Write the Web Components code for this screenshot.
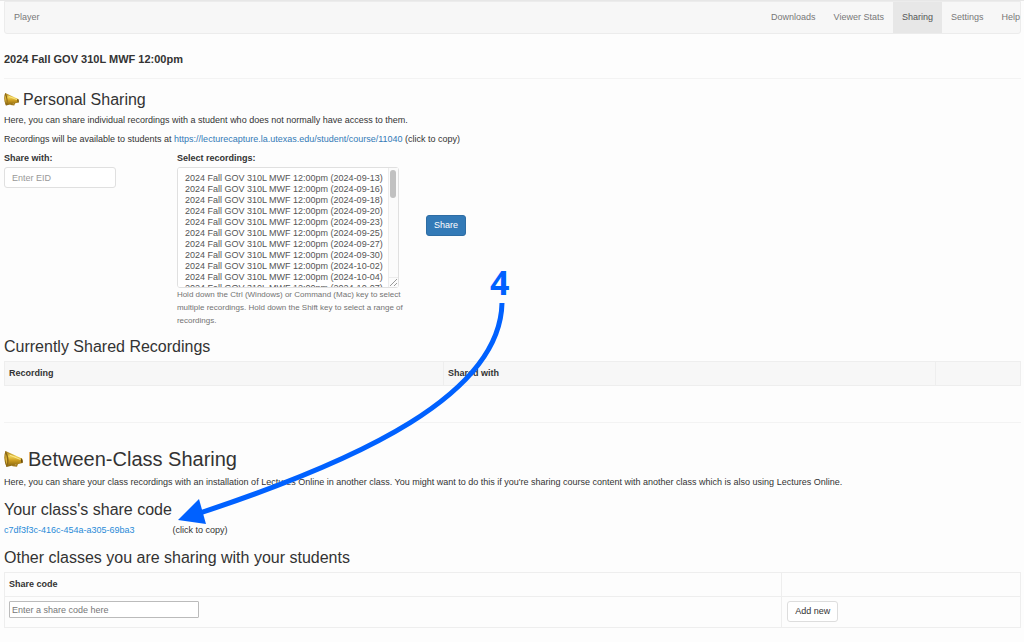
<!DOCTYPE html>
<html lang="en">
<head>
<meta charset="utf-8">
<title>Sharing</title>
<style>
  body {
    margin: 0;
    background: #fdfdfd;
    color: #333;
    font: 9px/13px "Liberation Sans", Arial, sans-serif;
  }
</style>
</head>
<body>
<lo-sharing-page></lo-sharing-page>

<script>
// navbar
class LoNavbar extends HTMLElement {
  constructor() {
    super();
    const shadow = this.attachShadow({ mode: "open" });
    shadow.innerHTML = `
      <style>
        :host { display: block; }
        nav {
          display: flex;
          justify-content: space-between;
          height: 31px;
          padding-left: 9px;
          background: #f7f7f7;
          border: 1px solid #ececec;
          border-radius: 0 0 3px 3px;
        }
        ul {
          display: flex;
          list-style: none;
          margin: 0 -9px 0 0;
          padding: 0;
        }
        a {
          display: block;
          padding: 0 9px;
          line-height: 31px;
          font-size: 9px;
          color: #777;
          text-decoration: none;
        }
        a.brand { padding: 0; }
        a:hover { color: #333; }
        a[aria-current] { background: #e7e7e7; color: #555; }
      </style>
      <nav>
        <a class="brand" href="#player">Player</a>
        <ul>
          <li><a href="#downloads">Downloads</a></li>
          <li><a href="#stats">Viewer Stats</a></li>
          <li><a href="#sharing" aria-current="page">Sharing</a></li>
          <li><a href="#settings">Settings</a></li>
          <li><a href="#help">Help</a></li>
        </ul>
      </nav>
    `;
  }
}

// megaphone icon, sized by --icon-width
class LoMegaphone extends HTMLElement {
  constructor() {
    super();
    this.attachShadow({ mode: "open" }).innerHTML = `
      <style>
        :host { display: block; width: var(--icon-width, 15px); }
        svg { display: block; width: 100%; }
      </style>
      <svg viewBox="0 0 38 34" aria-hidden="true">
        <defs>
          <linearGradient id="brass" x1="0" y1="0" x2="0" y2="1">
            <stop offset="0" stop-color="#9a7214"/>
            <stop offset=".35" stop-color="#f0d050"/>
            <stop offset=".6" stop-color="#cb9c20"/>
            <stop offset="1" stop-color="#80600f"/>
          </linearGradient>
        </defs>
        <path d="M15 25l3 4 7 1 2-6" fill="none" stroke="#a27a1d" stroke-width="3"/>
        <path d="M3 0L36 15q2 4 1 9L5 32Q-2 15 3 0z" fill="url(#brass)"/>
        <path d="M3 0q-5 15 2 32 5-5 4-15Q8 5 3 0z" fill="#8c6817"/>
        <path d="M3 5q-2 11 2 22 2-4 1-11T3 5z" fill="#dcb53c"/>
        <path d="M11 8l22 9" stroke="#fbe992" stroke-width="2"/>
        <path d="M34 15q-1 4 1 9l2 0q1-5-1-9z" fill="#6b4d0e"/>
      </svg>
    `;
  }
}

// section heading, size="large" for the bigger one
class LoHeading extends HTMLElement {
  constructor() {
    super();
    this.attachShadow({ mode: "open" }).innerHTML = `
      <style>
        :host { display: block; margin-bottom: 5px; }
        :host([size="large"]) { margin-bottom: 6px; }
        h3 {
          display: flex;
          align-items: center;
          gap: 4px;
          margin: 0;
          font-size: 16px;
          line-height: 18px;
          font-weight: 500;
        }
        :host([size="large"]) h3 {
          gap: 5px;
          font-size: 20px;
          line-height: 22px;
        }
      </style>
      <h3><slot name="icon"></slot><slot></slot></h3>
    `;
  }
}

// form for sharing single recordings with a student
class LoShareForm extends HTMLElement {
  constructor() {
    super();
    this.attachShadow({ mode: "open" }).innerHTML = `
      <style>
        :host { display: block; }
        form {
          display: grid;
          grid-template-columns: 17% 24.5% auto;
          align-items: start;
        }
        label { display: block; margin-bottom: 2px; font-weight: 700; }
        input, select {
          box-sizing: border-box;
          border: 1px solid #e0e0e0;
          border-radius: 3px;
          background: #fff;
          color: #555;
          font: inherit;
          outline: 0;
        }
        input { width: 112px; height: 21px; padding: 0 7px; }
        input::placeholder { color: #999; }
        .list { position: relative; width: 222px; }
        select {
          display: block;
          width: 100%;
          height: 121px;
          padding: 5px 0 0 5px;
          overflow-y: scroll;
          scrollbar-width: none;
        }
        option { min-height: 11px; padding: 0 2px; line-height: 11px; }
        .track {
          position: absolute;
          top: 1px;
          right: 1px;
          bottom: 1px;
          width: 10px;
          box-sizing: border-box;
          border-left: 1px solid #ececec;
          background: #fbfbfb;
          pointer-events: none;
        }
        .thumb {
          width: 6px;
          height: 28px;
          margin: 2px 1px;
          border-radius: 3px;
          background: #c1c1c1;
        }
        .grip {
          position: absolute;
          right: 0;
          bottom: 0;
          display: block;
          border-top: 1px solid #ececec;
        }
        .help { width: 230px; margin: 0; font-size: 8px; color: #737373; }
        button {
          justify-self: start;
          height: 21px;
          margin-top: 63px;
          padding: 0 7px;
          border: 1px solid #2e6da4;
          border-radius: 3px;
          background: #337ab7;
          color: #fff;
          font: inherit;
          cursor: pointer;
        }
      </style>
      <form>
        <div>
          <label for="eid">Share with:</label>
          <input id="eid" type="text" placeholder="Enter EID">
        </div>
        <div>
          <label for="recordings">Select recordings:</label>
          <div class="list">
            <select id="recordings" multiple></select>
            <div class="track">
              <div class="thumb"></div>
              <svg class="grip" width="9" height="9" viewBox="0 0 9 9" stroke="#999"><path d="M1 8L8 1M5 8L8 5"/></svg>
            </div>
          </div>
          <p class="help">Hold down the Ctrl (Windows) or Command (Mac) key to select multiple recordings. Hold down the Shift key to select a range of recordings.</p>
        </div>
        <button type="button">Share</button>
      </form>
    `;
    this.fillRecordings();
  }

  connectedCallback() {
    const select = this.shadowRoot.querySelector("select");
    select.addEventListener("scroll", () => this.moveThumb(select));
  }

  fillRecordings() {
    const dates = [
      "2024-09-13", "2024-09-16", "2024-09-18", "2024-09-20", "2024-09-23",
      "2024-09-25", "2024-09-27", "2024-09-30", "2024-10-02", "2024-10-04",
      "2024-10-07", "2024-10-09", "2024-10-11", "2024-10-14", "2024-10-16",
      "2024-10-18", "2024-10-21", "2024-10-23", "2024-10-25", "2024-10-28",
      "2024-10-30", "2024-11-01", "2024-11-04", "2024-11-06", "2024-11-08",
      "2024-11-11", "2024-11-13", "2024-11-15", "2024-11-18", "2024-11-20",
      "2024-11-22", "2024-12-02", "2024-12-04", "2024-12-06", "2024-12-09"
    ];
    const select = this.shadowRoot.querySelector("select");
    dates.forEach(date => {
      select.add(new Option(`2024 Fall GOV 310L MWF 12:00pm (${date})`, date));
    });
  }

  moveThumb(select) {
    const range = select.scrollHeight - select.clientHeight;
    const offset = range > 0 ? (select.scrollTop / range) * 77 : 0;
    this.shadowRoot.querySelector(".thumb").style.transform = `translateY(${offset}px)`;
  }
}

const tableStyles = `
  :host { display: block; }
  table { width: 100%; border-collapse: collapse; table-layout: fixed; }
  th, td { padding: 5px 4px; border: 1px solid #eee; text-align: left; vertical-align: top; }
`;

class LoSharedTable extends HTMLElement {
  constructor() {
    super();
    this.attachShadow({ mode: "open" }).innerHTML = `
      <style>
        ${tableStyles}
        th { background: #f7f7f7; }
      </style>
      <table>
        <colgroup><col style="width: 43.2%"><col style="width: 48.4%"><col></colgroup>
        <thead>
          <tr><th>Recording</th><th>Shared with</th><th></th></tr>
        </thead>
      </table>
    `;
  }
}

class LoCodeTable extends HTMLElement {
  constructor() {
    super();
    this.attachShadow({ mode: "open" }).innerHTML = `
      <style>
        ${tableStyles}
        td { padding: 4px 4px 5px; }
        td + td { padding-left: 5px; }
        input {
          display: block;
          box-sizing: border-box;
          width: 190px;
          height: 17px;
          padding: 0 2px;
          border: 1px solid #bbb;
          border-radius: 1px;
          background: #fff;
          font: inherit;
        }
        input::placeholder { color: #777; }
        button {
          display: block;
          height: 21px;
          padding: 0 7px;
          border: 1px solid #ddd;
          border-radius: 3px;
          background: #fff;
          color: #333;
          font: inherit;
          cursor: pointer;
        }
      </style>
      <table>
        <colgroup><col style="width: 76.5%"><col></colgroup>
        <thead>
          <tr><th id="code">Share code</th><th></th></tr>
        </thead>
        <tbody>
          <tr>
            <td><input type="text" aria-labelledby="code" placeholder="Enter a share code here"></td>
            <td><button type="button">Add new</button></td>
          </tr>
        </tbody>
      </table>
    `;
  }
}

// numbered arrow drawn over the page
class LoArrow extends HTMLElement {
  constructor() {
    super();
    this.attachShadow({ mode: "open" }).innerHTML = `
      <style>
        :host { position: absolute; left: 0; top: 0; pointer-events: none; }
        svg { display: block; }
        text { font: 700 34px "Open Sans", sans-serif; }
      </style>
      <svg width="520" height="540" fill="#0061ff">
        <text x="490" y="294">4</text>
        <path d="M502 302C500 394 360 459 200 512" fill="none" stroke="#0061ff" stroke-width="5"/>
        <path d="M178 519L199 498L206 523z"/>
      </svg>
    `;
  }
}

class LoSharingPage extends HTMLElement {
  constructor() {
    super();
    this.attachShadow({ mode: "open" }).innerHTML = `
      <style>
        :host {
          display: block;
          position: relative;
          padding: 0 3px 0 4px;
          border-top: 1px solid #e7e7e7;
        }
        h1 { margin: 19px 0 12px; font-size: 11px; line-height: 13px; font-weight: 700; }
        hr { margin: 0; border: 0; border-top: 1px solid #f3f3f3; }
        p { margin: 0 0 6px; }
        a { color: #337ab7; text-decoration: none; }
        section { padding-top: 12px; }
        .recordings { padding: 11px 0 36px; }
        .between { padding-top: 25px; }
        .between p { margin-bottom: 12px; }
        .between a { color: #2a8bd8; }
        .large { --icon-width: 19px; }
        .code { display: flex; gap: 38px; }
      </style>
      <lo-navbar></lo-navbar>
      <h1>2024 Fall GOV 310L MWF 12:00pm</h1>
      <hr>
      <section>
        <lo-heading><lo-megaphone slot="icon"></lo-megaphone>Personal Sharing</lo-heading>
        <p>Here, you can share individual recordings with a student who does not normally have access to them.</p>
        <p>Recordings will be available to students at <a href="#copy-link">https://lecturecapture.la.utexas.edu/student/course/11040</a> (click to copy)</p>
        <lo-share-form></lo-share-form>
      </section>
      <section class="recordings">
        <lo-heading>Currently Shared Recordings</lo-heading>
        <lo-shared-table></lo-shared-table>
      </section>
      <hr>
      <section class="between">
        <lo-heading size="large"><lo-megaphone slot="icon" class="large"></lo-megaphone>Between-Class Sharing</lo-heading>
        <p>Here, you can share your class recordings with an installation of Lectures Online in another class. You might want to do this if you're sharing course content with another class which is also using Lectures Online.</p>
        <lo-heading>Your class's share code</lo-heading>
        <p class="code"><a href="#copy-code">c7df3f3c-416c-454a-a305-69ba3</a><span>(click to copy)</span></p>
        <lo-heading>Other classes you are sharing with your students</lo-heading>
        <lo-code-table></lo-code-table>
      </section>
      <lo-arrow></lo-arrow>
    `;
  }
}

customElements.define("lo-navbar", LoNavbar);
customElements.define("lo-megaphone", LoMegaphone);
customElements.define("lo-heading", LoHeading);
customElements.define("lo-share-form", LoShareForm);
customElements.define("lo-shared-table", LoSharedTable);
customElements.define("lo-code-table", LoCodeTable);
customElements.define("lo-arrow", LoArrow);
customElements.define("lo-sharing-page", LoSharingPage);
</script>
</body>
</html>
